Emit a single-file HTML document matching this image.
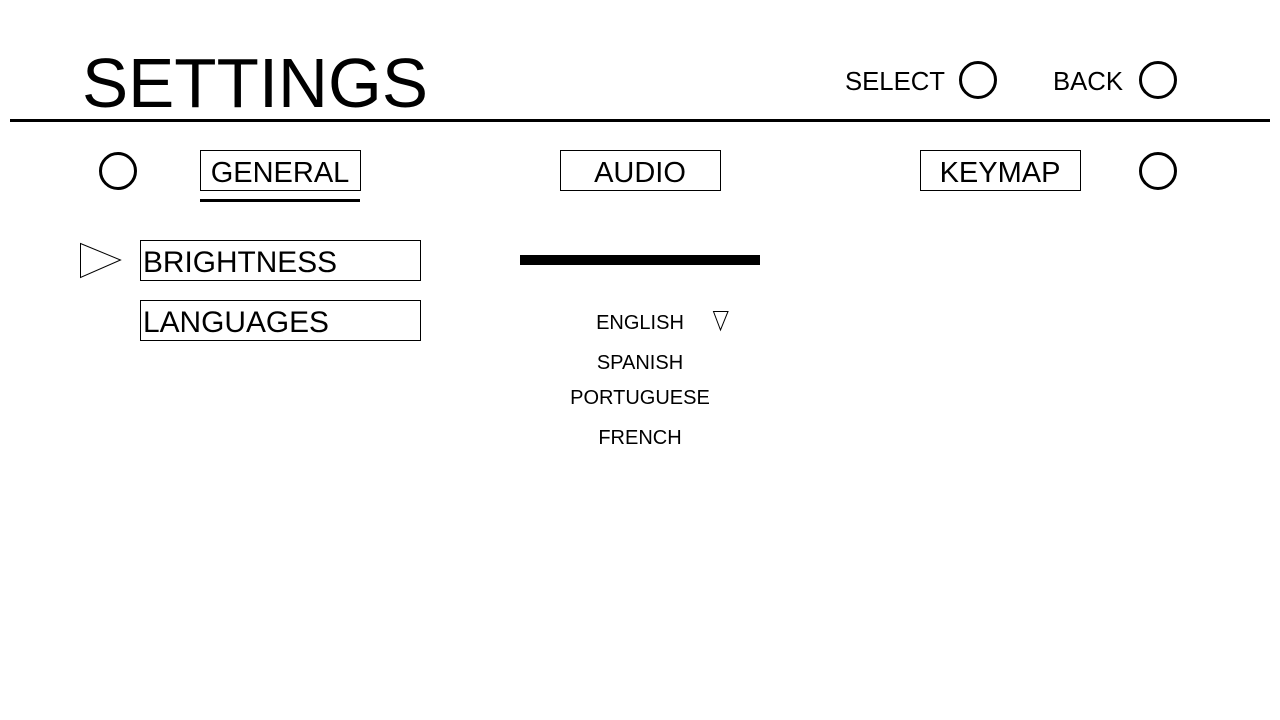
<!DOCTYPE html>
<html><head><meta charset="utf-8"><style>html,body{margin:0;padding:0;background:#fff;width:1280px;height:720px;overflow:hidden}</style></head>
<body>
<svg width="1280" height="720" xmlns="http://www.w3.org/2000/svg" font-family="Liberation Sans, Arial, sans-serif">
<rect width="1280" height="720" fill="#fff"/>
<text x="82" y="107" font-size="70" textLength="346" lengthAdjust="spacingAndGlyphs">SETTINGS</text>
<text x="845" y="90" font-size="26" textLength="100" lengthAdjust="spacingAndGlyphs">SELECT</text>
<circle cx="978" cy="80" r="17.5" fill="none" stroke="#000" stroke-width="3"/>
<text x="1053" y="90" font-size="26" textLength="70" lengthAdjust="spacingAndGlyphs">BACK</text>
<circle cx="1158" cy="80" r="17.5" fill="none" stroke="#000" stroke-width="3"/>
<rect x="10" y="119" width="1260" height="3" fill="#000"/>
<circle cx="118" cy="171" r="17.5" fill="none" stroke="#000" stroke-width="3"/>
<circle cx="1158" cy="171" r="17.5" fill="none" stroke="#000" stroke-width="3"/>
<rect x="200.5" y="150.5" width="160" height="40" fill="none" stroke="#000"/>
<text x="280" y="182" font-size="29" text-anchor="middle">GENERAL</text>
<rect x="200" y="199" width="160" height="3" fill="#000"/>
<rect x="560.5" y="150.5" width="160" height="40" fill="none" stroke="#000"/>
<text x="640" y="182" font-size="29" text-anchor="middle">AUDIO</text>
<rect x="920.5" y="150.5" width="160" height="40" fill="none" stroke="#000"/>
<text x="1000" y="182" font-size="29" text-anchor="middle">KEYMAP</text>
<polygon points="80.5,243.5 120.5,260 80.5,277.5" fill="none" stroke="#000"/>
<rect x="140.5" y="240.5" width="280" height="40" fill="none" stroke="#000"/>
<text x="143" y="272" font-size="30" textLength="194" lengthAdjust="spacingAndGlyphs">BRIGHTNESS</text>
<rect x="140.5" y="300.5" width="280" height="40" fill="none" stroke="#000"/>
<text x="143" y="332" font-size="30" textLength="186" lengthAdjust="spacingAndGlyphs">LANGUAGES</text>
<rect x="520" y="255" width="240" height="10" fill="#000"/>
<text x="640" y="329" font-size="20" text-anchor="middle">ENGLISH</text>
<polygon points="713.5,311.5 728,311.5 720.5,330" fill="none" stroke="#000"/>
<text x="640" y="369" font-size="20" text-anchor="middle">SPANISH</text>
<text x="640" y="404" font-size="20" text-anchor="middle">PORTUGUESE</text>
<text x="640" y="444" font-size="20" text-anchor="middle">FRENCH</text>
</svg>
</body></html>
